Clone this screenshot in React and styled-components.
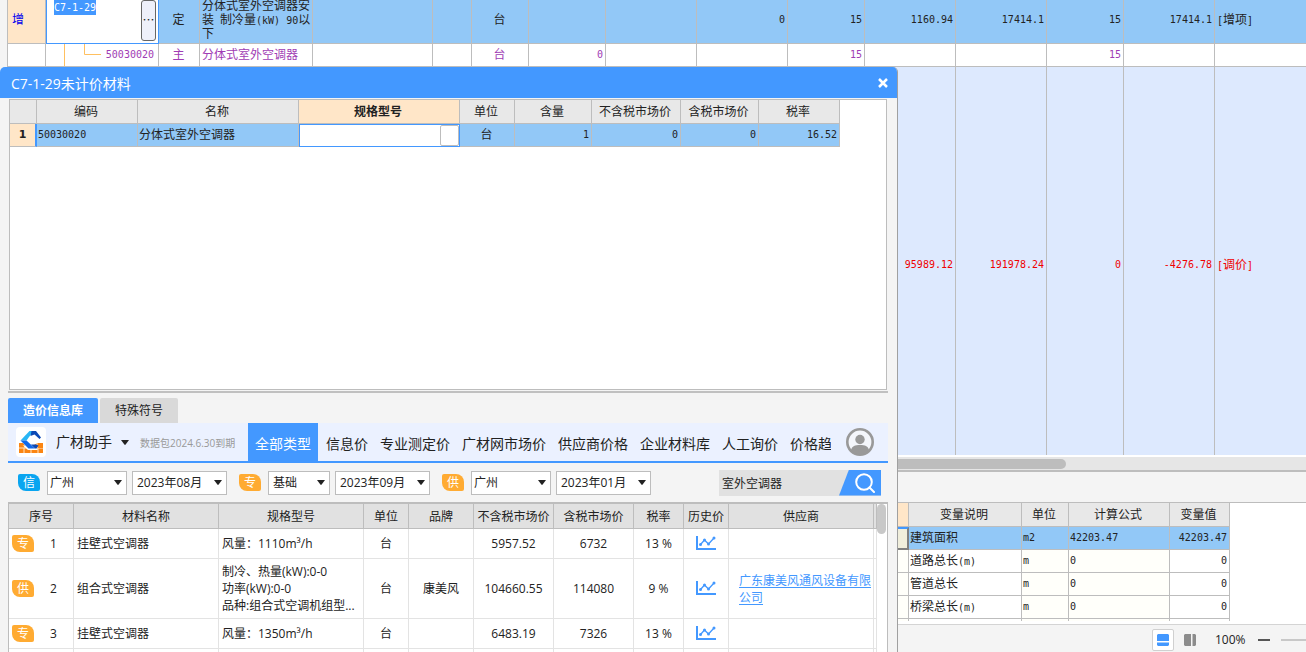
import React from 'react';
import styled, { createGlobalStyle, css } from 'styled-components';

const songti = '"Noto Sans CJK SC", "Liberation Sans", sans-serif';
const yahei = '"Open Sans", "Noto Sans CJK SC", sans-serif';
const digits = '"DejaVu Sans Mono", "Noto Sans CJK SC", monospace';

const blue = '#4398ff';
const line = '#bdbdbd';
const picked = '#92c8f7';
const peach = '#ffe6c8';
const purple = '#a03cb4';

const GlobalStyle = createGlobalStyle`
  * {
    box-sizing: border-box;
  }
  body {
    margin: 0;
    overflow: hidden;
    color: #222;
    font-family: ${songti};
    font-size: 12px;
  }
  button, input, select {
    margin: 0;
    padding: 0;
    border: none;
    color: inherit;
    font: inherit;
  }
`;

const Page = styled.div`
  display: flex;
  flex-direction: column;
  height: 100vh;
  overflow: hidden;
  background: #f4f4f4;
`;

const Grid = styled.table`
  table-layout: fixed;
  border-spacing: 0;
  width: ${props => props.$width || 'auto'};
`;

const Cell = styled.td`
  height: ${props => props.$height || 23}px;
  padding: 0 2px 2px ${props => props.$indent || 1}px;
  overflow: hidden;
  border-right: 1px solid ${line};
  border-bottom: 1px solid ${line};
  text-align: ${props => props.$align || 'left'};
  line-height: 14px;
  color: ${props => props.$color || 'inherit'};
  background: ${props => props.$bg || 'transparent'};
  ${props => props.$num && css`
    padding-bottom: 0;
    font-family: ${digits};
    font-size: 10px;
  `}
`;

const HeadCell = styled.th`
  height: 24px;
  padding: 0 2px 1px 0;
  border-right: 1px solid ${line};
  border-bottom: 1px solid ${line};
  background: ${props => (props.$active ? peach : '#e8e8e8')};
  font-weight: ${props => (props.$active ? 'bold' : 'normal')};
  line-height: 14px;
  white-space: nowrap;
`;

const Half = styled.span`
  font-family: ${digits};
  font-size: 10px;
  line-height: 10px;
`;

/* main list behind the dialog */

const MainPane = styled.div`
  flex: 1;
  min-height: 0;
  overflow: hidden;
  background: #dde9fe;
`;

const MainGrid = styled(Grid)`
  margin-top: -4px;

  td:last-child {
    border-right: none;
  }
`;

const MainRow = styled.tr`
  background: ${props => props.$bg};
  color: ${props => props.$color || 'inherit'};
`;

const Gutter = styled(Cell)`
  background: #f4f4f4;
  border-bottom: none;
`;

const NameCell = styled(Cell)`
  padding: 0 0 2px 2px;
`;

const CodeCell = styled(Cell)`
  padding: 0;
  border: 1px solid ${blue};
  background: #fff;
`;

const CodeEditor = styled.div`
  display: flex;
  justify-content: space-between;
  height: 45px;
  padding: 2px 2px 2px 7px;
`;

const Selected = styled.span`
  align-self: flex-start;
  height: 15px;
  background: ${blue};
  color: #fff;
  font-family: ${digits};
  font-size: 10px;
  line-height: 15px;
`;

const MoreButton = styled.button`
  width: 15px;
  height: 41px;
  border: 1px solid #666;
  border-radius: 3px;
  background: #eef0fa;
  line-height: 12px;
`;

const TreeCell = styled(Cell)`
  padding: 0 4px 0 18px;
`;

const TreeBox = styled.div`
  display: flex;
  align-items: center;
  justify-content: space-between;
  height: 22px;
`;

/* lower right pane */

const Lower = styled.div`
  padding-left: 898px;
`;

const ScrollTrack = styled.div`
  height: 17px;
  padding: 2px 0 3px;
  border-top: 2px solid #fff;
  border-bottom: 2px solid ${line};
  background: #e6e6e6;
`;

const ScrollThumb = styled.div`
  width: 168px;
  height: 10px;
  border-radius: 0 5px 5px 0;
  background: #bdbdbd;
`;

const VariablePane = styled.div`
  height: 122px;
  margin-top: 30px;
  overflow: hidden;
  border-top: 1px solid ${line};
  border-bottom: 3px solid #fff;
  background: #fff;
`;

const StatusBar = styled.div`
  display: flex;
  align-items: center;
  height: 28px;
  padding: 2px 0 0 254px;
  border-top: 1px solid #d4d4d4;
  font-family: ${yahei};
`;

const ViewButton = styled.button`
  display: flex;
  align-items: center;
  justify-content: center;
  width: 22px;
  height: 22px;
  margin-right: 5px;
  border: 1px solid ${props => (props.$on ? '#d0d0d0' : 'transparent')};
  border-radius: 2px;
  background: ${props => (props.$on ? '#fff' : 'transparent')};
`;

const Zoom = styled.span`
  width: 43px;
  margin-left: 9px;
`;

const MinusButton = styled.button`
  width: 12px;
  height: 2px;
  margin-right: 11px;
  background: #555;
`;

const ZoomLine = styled.div`
  flex: 1;
  height: 2px;
  background: #c8c8c8;
`;

/* dialog */

const Dialog = styled.section`
  position: absolute;
  top: 67px;
  bottom: 0;
  left: 0;
  display: flex;
  flex-direction: column;
  width: 898px;
  max-width: 100%;
  overflow: hidden;
  border-right: 1px solid #a0a0a0;
  border-radius: 5px 5px 0 0;
  background: #f4f4f4;
  font-family: ${yahei};
`;

const TitleBar = styled.header`
  display: flex;
  flex: none;
  align-items: center;
  justify-content: space-between;
  height: 31px;
  padding: 0 8px 0 11px;
  background: ${blue};
  color: #fff;
`;

const Title = styled.h1`
  margin: 2px 0 0;
  font-size: 14px;
  font-weight: normal;
  line-height: 20px;
`;

const CloseButton = styled.button`
  display: flex;
  background: none;
`;

const MaterialBox = styled.div`
  flex: none;
  height: 291px;
  margin: 1px 10px 0 9px;
  border: 1px solid ${line};
  background: #fff;
  font-family: ${songti};
`;

const RowNumber = styled(Cell)`
  padding: 0;
  border-right: 2px solid ${blue};
  background: ${peach};
  font-family: "DejaVu Sans", sans-serif;
  font-size: 11px;
  font-weight: bold;
`;

const SpecCell = styled(Cell)`
  padding: 0;
  border: 1px solid ${blue};
  background: #fff;
`;

const SpecEditor = styled.div`
  display: flex;
  height: 21px;
`;

const SpecInput = styled.input`
  flex: 1;
  min-width: 0;
  padding: 0 2px;
  outline: none;
`;

const SpecButton = styled.button`
  width: 19px;
  border: 1px solid ${line};
  border-radius: 2px;
  background: #fff;
`;

const Divider = styled.div`
  flex: none;
  height: 2px;
  margin: 1px 9px 5px 8px;
  background: #c0c0c0;
`;

const Tabs = styled.div`
  display: flex;
  flex: none;
  gap: 2px;
  padding-left: 8px;
`;

const Tab = styled.button`
  width: ${props => (props.$on ? 90 : 78)}px;
  height: 25px;
  border-radius: 2px 2px 0 0;
  background: ${props => (props.$on ? blue : '#d9d9d9')};
  color: ${props => (props.$on ? '#fff' : '#222')};
  font-weight: ${props => (props.$on ? 'bold' : 'normal')};
  line-height: 18px;
`;

const HelperBar = styled.div`
  display: flex;
  flex: none;
  align-items: center;
  height: 40px;
  margin: 0 9px 0 8px;
  padding-left: 8px;
  border-bottom: 2px solid ${blue};
  background: #ebf1ff;
`;

const Brand = styled.button`
  display: flex;
  align-items: center;
  gap: 9px;
  margin: 0 11px 0 10px;
  background: none;
  font-size: 14px;
  line-height: 20px;
`;

const Expiry = styled.span`
  width: 108px;
  color: #999;
  font-size: 10px;
  white-space: nowrap;
`;

const Nav = styled.nav`
  display: flex;
  flex: 1;
  align-items: stretch;
  min-width: 0;
  height: 38px;
  overflow: hidden;
`;

const NavLink = styled.a`
  flex: none;
  padding: 0 ${props => (props.$on ? 7 : 6)}px;
  margin-right: ${props => (props.$on ? 2 : 0)}px;
  background: ${props => (props.$on ? blue : 'transparent')};
  color: ${props => (props.$on ? '#fff' : '#222')};
  font-size: 14px;
  line-height: 42px;
  text-decoration: none;
  white-space: nowrap;
`;

const AvatarButton = styled.button`
  display: flex;
  margin: 0 14px 0 15px;
  background: none;
`;

const Filters = styled.div`
  display: flex;
  flex: none;
  align-items: center;
  height: 39px;
  padding: 0 16px 0 18px;
`;

const Badge = styled.span`
  display: inline-block;
  width: 22px;
  height: 17px;
  margin-right: ${props => props.$gap || 0}px;
  border-radius: 2px 8px 2px 8px;
  background: ${props => (props.$blue ? '#0aa5f0' : '#ffab32')};
  color: #fff;
  font-size: 12px;
  line-height: 17px;
  text-align: center;
`;

const SelectBox = styled.label`
  position: relative;
  width: ${props => props.$width}px;
  margin-right: ${props => (props.$last ? 12 : 5)}px;

  svg {
    position: absolute;
    top: 9px;
    right: 5px;
    pointer-events: none;
  }
`;

const Select = styled.select`
  width: 100%;
  height: 24px;
  padding: 0 4px 0 ${props => (props.$narrow ? 2 : 4)}px;
  appearance: none;
  border: 1px solid ${line};
  border-radius: 0;
  background: #fff;
`;

const Search = styled.form`
  display: flex;
  width: 162px;
  height: 26px;
  margin-left: auto;
  background: #e1e1e1;
`;

const SearchInput = styled.input`
  flex: 1;
  min-width: 0;
  padding: 0 3px;
  background: none;
  outline: none;
`;

const SearchButton = styled.button`
  display: flex;
  align-items: center;
  justify-content: flex-end;
  width: 42px;
  padding-right: 6px;
  background: ${blue};
  clip-path: polygon(10px 0, 100% 0, 100% 100%, 0 100%);
`;

const ResultBox = styled.div`
  display: flex;
  flex: 1;
  align-items: flex-start;
  min-height: 0;
  margin: 0 9px 0 8px;
  overflow: hidden;
  border: 1px solid ${line};
  border-top-width: 2px;
  border-bottom: none;
  background: #fff;
`;

const ResultHead = styled.th`
  height: 25px;
  padding: 0;
  border-right: 1px solid ${line};
  border-bottom: 1px solid ${line};
  background: #e1e1e1;
  font-weight: normal;
  white-space: nowrap;
`;

const ResultCell = styled.td`
  height: ${props => (props.$tall ? 60 : 30)}px;
  padding: 0 ${props => props.$pad || 3}px;
  border-right: 1px solid #e3e3e3;
  border-bottom: 1px solid #e3e3e3;
  text-align: ${props => props.$align || 'center'};
  line-height: 17px;

  svg {
    display: block;
    margin: 0 auto;
  }
`;

const Index = styled.div`
  display: flex;
  align-items: center;
  gap: 16px;
`;

const SupplierLink = styled.a`
  display: block;
  padding-left: 9px;
  color: ${blue};
  text-underline-offset: 2px;
`;

const ResultThumb = styled.div`
  width: 9px;
  height: 30px;
  border-radius: 5px;
  background: #c8c8c8;
`;

const ArrowIcon = () => (
  <svg width="8" height="5" viewBox="0 0 8 5">
    <path d="M0 0h8L4.6 4.6a.8.8 0 0 1-1.2 0z" fill="#222" />
  </svg>
);

const LogoIcon = () => (
  <svg width="30" height="30" viewBox="0 0 30 30">
    <rect width="30" height="30" rx="4" fill="#fff" />
    <path d="M3 16h24v10H3z" fill="#fb8512" />
    <path d="M3 21h24M9 16v5M21 16v5M15 21v5M8 21v5M22 21v5" stroke="#ffe3c2" strokeWidth="1" />
    <path d="M14 3L2.500 14.500 12 23h10l-4-5 5-3V4z" fill="#fff" />
    <path d="M3 16h4l2 2.500H3zM23 16h4v5h-5z" fill="#fb8512" />
    <path d="M13.500 4L4.500 13.500h6L17.500 4z" fill="#28b6f5" />
    <path d="M4.500 13.500l8 8h6.500l-8.500-8z" fill="#1268e8" />
    <path d="M15.500 4H20l5 6.500-1.500 1.500L18.500 7.500 14.500 9z" fill="#0c49b5" />
    <path d="M15 17.500l4 4h1.500l2-3-2.500-1z" fill="#0c49b5" />
  </svg>
);

const AvatarIcon = () => (
  <svg width="28" height="28" viewBox="0 0 28 28">
    <circle cx="14" cy="14" r="12.700" fill="#f4f6fb" stroke="#999" strokeWidth="2.600" />
    <circle cx="14" cy="11.500" r="4.700" fill="#999" />
    <path d="M5 22c1-4 4-5 9-5s8 1 9 5c-2 3-5 4.500-9 4.500S7 25 5 22z" fill="#999" />
  </svg>
);

const SearchIcon = () => (
  <svg width="20" height="20" viewBox="0 0 20 20" fill="none" stroke="#fff" strokeWidth="2">
    <circle cx="9" cy="9" r="7.800" />
    <path d="M14.500 14.500l4.500 4.500" strokeLinecap="round" />
  </svg>
);

const ChartIcon = () => (
  <svg width="20" height="15" viewBox="0 0 20 15" fill="none" stroke={blue}>
    <path d="M1 0v13h19" strokeWidth="2" />
    <path d="M4.500 8.500l4-4.500 4 4L18 2" strokeWidth="1.300" />
    <g fill={blue} stroke="none">
      <circle cx="4.500" cy="8.500" r="1.500" />
      <circle cx="8.500" cy="4" r="1.500" />
      <circle cx="12.500" cy="8" r="1.500" />
      <circle cx="18" cy="2" r="1.500" />
    </g>
  </svg>
);

const mainCols = [8, 38, 113, 41, 113, 120, 39, 57, 77, 91, 91, 77, 91, 91, 77, 91];

const materialCols = [
  [27, ''], [101, '编码'], [161, '名称'], [161, '规格型号'], [55, '单位'],
  [77, '含量'], [89, '不含税市场价'], [78, '含税市场价'], [81, '税率'],
];

const resultCols = [
  [65, '序号'], [145, '材料名称'], [145, '规格型号'], [45, '单位'], [65, '品牌'],
  [80, '不含税市场价'], [80, '含税市场价'], [50, '税率'], [45, '历史价'], [145, '供应商'], [3, ''],
];

const results = [
  { id: 1, tag: '专', name: '挂壁式空调器', spec: ['风量：1110m³/h'], brand: '', net: '5957.52', gross: '6732', rate: '13 %' },
  {
    id: 2,
    tag: '供',
    name: '组合式空调器',
    spec: ['制冷、热量(kW):0-0', '功率(kW):0-0', '品种:组合式空调机组型...'],
    brand: '康美风',
    net: '104660.55',
    gross: '114080',
    rate: '9 %',
    supplier: '广东康美风通风设备有限公司',
  },
  { id: 3, tag: '专', name: '挂壁式空调器', spec: ['风量：1350m³/h'], brand: '', net: '6483.19', gross: '7326', rate: '13 %' },
];

const variableCols = [[11, ''], [113, '变量说明'], [47, '单位'], [101, '计算公式'], [60, '变量值']];

const variables = [
  ['建筑面积', 'm2', '42203.47', '42203.47'],
  ['道路总长(m)', 'm', '0', '0'],
  ['管道总长', 'm', '0', '0'],
  ['桥梁总长(m)', 'm', '0', '0'],
  ['', '', '', ''],
];

const navItems = ['信息价', '专业测定价', '广材网市场价', '供应商价格', '企业材料库', '人工询价', '价格趋势'];

// half-width characters take exactly half of a Chinese character
const Mixed = ({ text }) => text.split(/([\x20-\x7e]+)/).map((part, i) => (
  i % 2 ? <Half key={i}>{part}</Half> : part
));

const Cols = ({ widths }) => (
  <colgroup>
    {widths.map((w, i) => <col key={i} style={{ width: w }} />)}
  </colgroup>
);

const Dropdown = ({ label, value, width, last, narrow }) => (
  <SelectBox $width={width} $last={last}>
    <Select aria-label={label} defaultValue={value} $narrow={narrow}>
      <option>{value}</option>
    </Select>
    <ArrowIcon />
  </SelectBox>
);

const MainList = () => (
  <MainPane>
    <MainGrid $width="100%">
      <colgroup>
        {mainCols.map((w, i) => <col key={i} style={{ width: w }} />)}
        <col />
      </colgroup>
      <tbody>
        <MainRow $bg={picked}>
          <Gutter $height={48} />
          <Cell $bg={peach} $color="#0000f0" $indent={4}>增</Cell>
          <CodeCell>
            <CodeEditor>
              <Selected>C7-1-29</Selected>
              <MoreButton aria-label="更多">…</MoreButton>
            </CodeEditor>
          </CodeCell>
          <Cell $align="center">定</Cell>
          <NameCell><Mixed text="分体式室外空调器安装 制冷量(kW) 90以下" /></NameCell>
          <Cell />
          <Cell />
          <Cell $align="center">台</Cell>
          <Cell />
          <Cell />
          <Cell $num $align="right">0</Cell>
          <Cell $num $align="right">15</Cell>
          <Cell $num $align="right">1160.94</Cell>
          <Cell $num $align="right">17414.1</Cell>
          <Cell $num $align="right">15</Cell>
          <Cell $num $align="right">17414.1</Cell>
          <Cell $indent={2}><Mixed text="[增项]" /></Cell>
        </MainRow>
        <MainRow $bg="#fff" $color={purple}>
          <Gutter />
          <Cell />
          <TreeCell $num>
            <TreeBox>
              <svg width="37" height="22" viewBox="0 0 37 22" fill="none" stroke="#ffc060">
                <path d="M.5 0v22M20.500 0v10.500H37" />
              </svg>
              50030020
            </TreeBox>
          </TreeCell>
          <Cell $align="center">主</Cell>
          <NameCell>分体式室外空调器</NameCell>
          <Cell />
          <Cell />
          <Cell $align="center">台</Cell>
          <Cell $num $align="right">0</Cell>
          <Cell />
          <Cell />
          <Cell $num $align="right">15</Cell>
          <Cell />
          <Cell />
          <Cell $num $align="right">15</Cell>
          <Cell />
          <Cell />
        </MainRow>
        <MainRow $bg="#dde9fe" $color="#f00000">
          <Gutter $height={396} />
          <Cell colSpan={11} />
          <Cell $num $align="right">95989.12</Cell>
          <Cell $num $align="right">191978.24</Cell>
          <Cell $num $align="right">0</Cell>
          <Cell $num $align="right">-4276.78</Cell>
          <Cell $indent={2}><Mixed text="[调价]" /></Cell>
        </MainRow>
      </tbody>
    </MainGrid>
  </MainPane>
);

const VariableCorner = styled(Cell)`
  border-right: ${props => (props.$on ? '2px solid #808080' : `1px solid ${line}`)};
  border-top: ${props => (props.$on ? `2px solid ${blue}` : 'none')};
  border-bottom: ${props => (props.$on ? '2px solid #808080' : `1px solid ${line}`)};
  background: ${props => (props.$on ? '#f0eedc' : '#fffffa')};
`;

const VariableList = () => (
  <VariablePane>
    <Grid $width="332px">
      <Cols widths={variableCols.map(c => c[0])} />
      <thead>
        <tr>
          {variableCols.map(([w, name], i) => <HeadCell key={w} $active={i === 0}>{name}</HeadCell>)}
        </tr>
      </thead>
      <tbody>
        {variables.map(([name, unit, formula, value], i) => (
          <tr key={name}>
            <VariableCorner $on={i === 0} />
            <Cell $bg={i === 0 ? picked : '#fff'}><Mixed text={name} /></Cell>
            <Cell $num $bg={i === 0 ? picked : '#fffffa'}>{unit}</Cell>
            <Cell $num $bg={i === 0 ? picked : '#fffffa'}>{formula}</Cell>
            <Cell $num $align="right" $bg={i === 0 ? picked : '#fff'}>{value}</Cell>
          </tr>
        ))}
      </tbody>
    </Grid>
  </VariablePane>
);

const MaterialList = () => (
  <MaterialBox>
    <Grid $width="830px">
      <Cols widths={materialCols.map(c => c[0])} />
      <thead>
        <tr>
          {materialCols.map(([w, name], i) => <HeadCell key={i} $active={i === 3}>{name}</HeadCell>)}
        </tr>
      </thead>
      <tbody>
        <MainRow $bg={picked}>
          <RowNumber $align="center">1</RowNumber>
          <Cell $num>50030020</Cell>
          <Cell>分体式室外空调器</Cell>
          <SpecCell>
            <SpecEditor>
              <SpecInput aria-label="规格型号" />
              <SpecButton aria-label="选择" />
            </SpecEditor>
          </SpecCell>
          <Cell $align="center">台</Cell>
          <Cell $num $align="right">1</Cell>
          <Cell $num $align="right">0</Cell>
          <Cell $num $align="right">0</Cell>
          <Cell $num $align="right">16.52</Cell>
        </MainRow>
      </tbody>
    </Grid>
  </MaterialBox>
);

const ResultList = () => (
  <ResultBox>
    <Grid $width="868px">
      <Cols widths={resultCols.map(c => c[0])} />
      <thead>
        <tr>
          {resultCols.map(([w, name], i) => <ResultHead key={i}>{name}</ResultHead>)}
        </tr>
      </thead>
      <tbody>
        {results.map(r => (
          <tr key={r.id}>
            <ResultCell $tall={r.spec.length > 1}>
              <Index>
                <Badge>{r.tag}</Badge>
                {r.id}
              </Index>
            </ResultCell>
            <ResultCell $align="left">{r.name}</ResultCell>
            <ResultCell $align="left">
              {r.spec.map(s => <div key={s}>{s}</div>)}
            </ResultCell>
            <ResultCell>台</ResultCell>
            <ResultCell>{r.brand}</ResultCell>
            <ResultCell>{r.net}</ResultCell>
            <ResultCell>{r.gross}</ResultCell>
            <ResultCell>{r.rate}</ResultCell>
            <ResultCell><ChartIcon /></ResultCell>
            <ResultCell $align="left" $pad={1}>
              {r.supplier && <SupplierLink href="#supplier">{r.supplier}</SupplierLink>}
            </ResultCell>
            <ResultCell $pad={1} />
          </tr>
        ))}
        <tr>
          {resultCols.map(([w], i) => <ResultCell key={i} $pad={1} />)}
        </tr>
      </tbody>
    </Grid>
    <ResultThumb />
  </ResultBox>
);

const MaterialDialog = () => (
  <Dialog>
    <TitleBar>
      <Title>C7-1-29未计价材料</Title>
      <CloseButton aria-label="关闭">
        <svg width="12" height="10" viewBox="0 0 12 10" stroke="#fff" strokeWidth="2.500">
          <path d="M2 1l8 8M10 1L2 9" />
        </svg>
      </CloseButton>
    </TitleBar>
    <MaterialList />
    <Divider />
    <Tabs>
      <Tab $on>造价信息库</Tab>
      <Tab>特殊符号</Tab>
    </Tabs>
    <HelperBar>
      <LogoIcon />
      <Brand>
        广材助手
        <ArrowIcon />
      </Brand>
      <Expiry>数据包2024.6.30到期</Expiry>
      <Nav>
        <NavLink href="#all" $on>全部类型</NavLink>
        {navItems.map(name => <NavLink key={name} href="#type">{name}</NavLink>)}
      </Nav>
      <AvatarButton aria-label="用户"><AvatarIcon /></AvatarButton>
    </HelperBar>
    <Filters>
      <Badge $blue $gap={7}>信</Badge>
      <Dropdown label="信息价地区" value="广州" width={80} narrow />
      <Dropdown label="信息价期数" value="2023年08月" width={95} last />
      <Badge $gap={7}>专</Badge>
      <Dropdown label="专业类型" value="基础" width={62} />
      <Dropdown label="专业期数" value="2023年09月" width={95} last />
      <Badge $gap={7}>供</Badge>
      <Dropdown label="供应商地区" value="广州" width={80} narrow />
      <Dropdown label="供应商期数" value="2023年01月" width={95} last />
      <Search onSubmit={e => e.preventDefault()}>
        <SearchInput aria-label="搜索" defaultValue="室外空调器" />
        <SearchButton aria-label="搜索"><SearchIcon /></SearchButton>
      </Search>
    </Filters>
    <ResultList />
  </Dialog>
);

const App = () => (
  <Page>
    <GlobalStyle />
    <MainList />
    <Lower>
      <ScrollTrack><ScrollThumb /></ScrollTrack>
      <VariableList />
      <StatusBar>
        <ViewButton $on aria-label="横向视图">
          <svg width="12" height="12" viewBox="0 0 12 12" fill={blue}>
            <path d="M1 0h10l1 1v6H0V1zM0 8.500h12V11l-1 1H1l-1-1z" />
          </svg>
        </ViewButton>
        <ViewButton aria-label="纵向视图">
          <svg width="12" height="12" viewBox="0 0 12 12" fill="#8c8c8c">
            <path d="M1 0h6v12H1l-1-1V1zM8.500 0H11l1 1v10l-1 1H8.500z" />
          </svg>
        </ViewButton>
        <Zoom>100%</Zoom>
        <MinusButton aria-label="缩小" />
        <ZoomLine />
      </StatusBar>
    </Lower>
    <MaterialDialog />
  </Page>
);

export default App;
